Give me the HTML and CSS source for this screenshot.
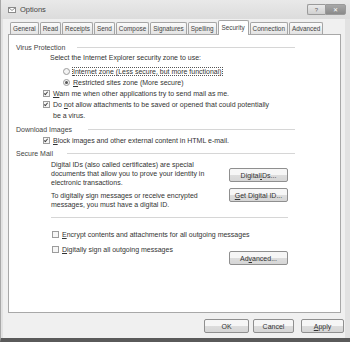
FILE: index.html
```html
<!DOCTYPE html>
<html lang="en">
<head>
  <meta charset="UTF-8" />
  <title>Options</title>
  <link rel="stylesheet" href="styles.css">
</head>
<body>

  <div class="window">

    <!-- Title bar -->
    <div class="titlebar">
      <svg class="app-icon" width="8" height="6" viewBox="0 0 8 6">
        <rect x="0.5" y="0.5" width="7" height="5" fill="#fff" stroke="#8a8a8a"/>
        <path d="M0.5 0.5 L4 3.5 L7.5 0.5" fill="none" stroke="#8a8a8a"/>
      </svg>
      <span class="title">Options</span>
      <div class="caption-buttons">
        <span class="cap-btn help">?</span>
        <span class="cap-btn close">&#x2715;</span>
      </div>
    </div>

    <div class="client">

      <!-- Tabs -->
      <div class="tabs">
        <span class="tab">General</span>
        <span class="tab">Read</span>
        <span class="tab">Receipts</span>
        <span class="tab">Send</span>
        <span class="tab">Compose</span>
        <span class="tab">Signatures</span>
        <span class="tab">Spelling</span>
        <span class="tab active">Security</span>
        <span class="tab">Connection</span>
        <span class="tab">Advanced</span>
      </div>

      <div class="panel">
        <div class="panel-content">

          <!-- Virus Protection -->
          <div class="group-title"><span>Virus Protection</span><span class="rule"></span></div>
          <div class="zone-label">Select the Internet Explorer security zone to use:</div>
          <div class="radios">
            <div class="radio-row">
              <span class="radio"></span>
              <span class="focus"><u>I</u>nternet zone (Less secure, but more functional)</span>
            </div>
            <div class="radio-row">
              <span class="radio checked"></span>
              <span><u>R</u>estricted sites zone (More secure)</span>
            </div>
          </div>
          <div class="check-row">
            <span class="check checked"></span>
            <span><u>W</u>arn me when other applications try to send mail as me.</span>
          </div>
          <div class="check-row">
            <span class="check checked"></span>
            <span class="wrap">Do <u>n</u>ot allow attachments to be saved or opened that could potentially be a virus.</span>
          </div>

          <!-- Download Images -->
          <div class="group-title download"><span>Download Images</span><span class="rule"></span></div>
          <div class="check-row block">
            <span class="check checked"></span>
            <span><u>B</u>lock images and other external content in HTML e-mail.</span>
          </div>

          <!-- Secure Mail -->
          <div class="group-title secure"><span>Secure Mail</span><span class="rule"></span></div>
          <div class="secure-body">
            <div class="ids">
              <div class="ids-text">
                <p>Digital IDs (also called certificates) are special documents that allow you to prove your identity in electronic transactions.</p>
                <p>To digitally sign messages or receive encrypted messages, you must have a digital ID.</p>
              </div>
              <div class="ids-buttons">
                <span class="btn">Digital <u>I</u>Ds...</span>
                <span class="btn"><u>G</u>et Digital ID...</span>
              </div>
            </div>
            <div class="separator"></div>
            <div class="check-row plain encrypt">
              <span class="check"></span>
              <span><u>E</u>ncrypt contents and attachments for all outgoing messages</span>
            </div>
            <div class="check-row plain">
              <span class="check"></span>
              <span><u>D</u>igitally sign all outgoing messages</span>
            </div>
            <div class="advanced-row">
              <span class="btn">Ad<u>v</u>anced...</span>
            </div>
          </div>

        </div>
      </div>

      <!-- Dialog buttons -->
      <div class="footer">
        <span class="btn ok">OK</span>
        <span class="btn cancel">Cancel</span>
        <span class="btn apply"><u>A</u>pply</span>
      </div>

    </div>
  </div>

</body>
</html>
```

FILE: styles.css
```css
body {
  margin: 0;
  font-family: "Liberation Sans", Arial, sans-serif;
  font-size: 7px;
  color: #333;
  background: #e4e4e4;
}

.window {
  width: 350px;
  height: 342px;
  box-sizing: border-box;
  background: #e2e2e2;
  border-left: 1px solid #a8a8a8;
  border-bottom: 4px solid #5a5a5a;
  display: flex;
  flex-direction: column;
}

.titlebar {
  height: 19px;
  display: flex;
  align-items: center;
  padding-left: 7px;
  background: linear-gradient(#e9e9e9, #dcdcdc);
}

.app-icon {
  margin-right: 4px;
}

.title {
  font-size: 7.5px;
  color: #444;
}

.caption-buttons {
  margin-left: auto;
  margin-right: 4px;
  display: flex;
  align-self: flex-start;
  margin-top: 4px;
}

.cap-btn {
  width: 17px;
  height: 9px;
  display: flex;
  align-items: center;
  justify-content: center;
  font-size: 6px;
  border: 1px solid #9a9a9a;
  border-radius: 2px;
}

.help {
  background: linear-gradient(#eaeaea, #d0d0d0);
  color: #666;
  border-right: none;
  border-radius: 2px 0 0 2px;
}

.close {
  width: 19px;
  background: linear-gradient(#a8a8a8, #8a8a8a);
  color: #fff;
  border-radius: 0 2px 2px 0;
}

.client {
  flex: 1;
  background: #f0f0f0;
  margin: 0 5px 0 2px;
  padding: 2px 0 0 5px;
  display: flex;
  flex-direction: column;
}

.tabs {
  display: flex;
  height: 13px;
  padding-left: 2px;
  align-items: flex-end;
  font-size: 6.4px;
}

.tab {
  height: 12px;
  box-sizing: border-box;
  display: flex;
  align-items: center;
  padding: 0 2px;
  margin-right: 1px;
  border: 1px solid #a5a5a5;
  border-bottom: none;
  border-radius: 2px 2px 0 0;
  background: linear-gradient(#fbfbfb, #e3e3e3);
  color: #444;
}

.tab.active {
  height: 15px;
  margin-bottom: -1px;
  background: #fff;
  position: relative;
  z-index: 1;
  padding: 0 3px 2px;
}

.panel {
  width: 333px;
  height: 279px;
  box-sizing: border-box;
  background: #fff;
  border: 1px solid #a8a8a8;
  padding: 7px 0 0 7px;
}

.panel-content {
  width: 279px;
}

.group-title {
  display: flex;
  align-items: center;
  height: 10px;
  color: #444;
}

.group-title .rule {
  flex: 1;
  border-top: 1px solid #d6d6d6;
  margin-left: 12px;
}

.group-title.download {
  margin-top: 3px;
}

.group-title.download .rule {
  margin-left: 16px;
}

.group-title.secure {
  margin-top: 2px;
}

.group-title.secure .rule {
  margin-left: 14px;
}

.zone-label {
  margin: 1px 0 0 34px;
  line-height: 10px;
}

.radios {
  margin: 3px 0 0 47px;
}

.radio-row {
  display: flex;
  align-items: center;
  height: 11px;
}

.radio {
  width: 5px;
  height: 5px;
  border: 1px solid #9c9c9c;
  border-radius: 50%;
  margin-right: 3px;
  background: #f4f4f4;
  position: relative;
}

.radio.checked::after {
  content: "";
  position: absolute;
  left: 1px;
  top: 1px;
  width: 3px;
  height: 3px;
  border-radius: 50%;
  background: #555;
}

.focus {
  outline: 1px dotted #555;
}

.check-row {
  display: flex;
  align-items: flex-start;
  line-height: 11px;
  margin-left: 27px;
}

.check-row .wrap {
  max-width: 224px;
}

.check-row.block {
  margin-top: 1px;
}

.check {
  flex: none;
  width: 5px;
  height: 5px;
  margin: 2px 3px 0 0;
  border: 1px solid #9c9c9c;
  background: #f6f6f6;
  position: relative;
}

.check.checked::after {
  content: "";
  position: absolute;
  left: 1px;
  top: 0;
  width: 1px;
  height: 3px;
  border: solid #444;
  border-width: 0 1px 1px 0;
  transform: rotate(40deg);
}

.secure-body {
  margin: 2px 0 0 35px;
  width: 237px;
}

.ids {
  display: flex;
  justify-content: space-between;
}

.ids-text {
  width: 164px;
  line-height: 9px;
}

.ids-text p {
  margin: 0 0 4px;
}

.ids-buttons {
  display: flex;
  flex-direction: column;
  gap: 6px;
  padding-top: 8px;
}

.btn {
  display: flex;
  align-items: center;
  justify-content: center;
  width: 59px;
  height: 14px;
  box-sizing: border-box;
  border: 1px solid #8f8f8f;
  border-radius: 2px;
  background: linear-gradient(#f6f6f6 50%, #dddddd 50%, #d6d6d6);
  color: #333;
}

.separator {
  border-top: 1px solid #d6d6d6;
  margin-top: 4px;
}

.check-row.plain {
  margin-left: 1px;
  margin-top: 4px;
}

.check-row.plain.encrypt {
  margin-top: 11px;
}

.advanced-row {
  display: flex;
  justify-content: flex-end;
  margin-top: -4px;
}

.footer {
  display: flex;
  justify-content: flex-end;
  gap: 4px;
  margin-top: 6px;
  padding-right: 1px;
}

.footer .ok {
  width: 45px;
}

.footer .cancel {
  width: 41px;
  margin-right: 3px;
}

.footer .apply {
  width: 43px;
}
```
